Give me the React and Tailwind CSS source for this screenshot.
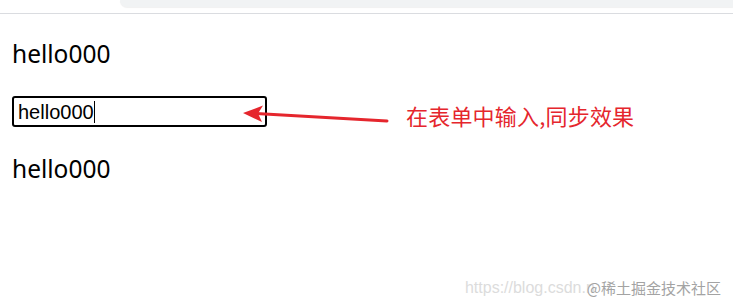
export default function App() {
  return (
    <main className="relative w-[733px] h-[306px] overflow-hidden bg-white">
      {/* browser chrome strip */}
      <div className="flex h-[14px] border-b border-[#dadce0]">
        <div className="w-[120px]"></div>
        <div className="flex-1 h-[7px] bg-[#f1f3f4] rounded-bl-[10px] shadow-[0_1px_1px_rgba(0,0,0,0.06)]"></div>
      </div>

      <div className="flex flex-col items-start pl-[12px] pt-[24px]">
        <p className="text-[24.5px] leading-[32px] text-black font-['Noto_Sans',sans-serif]">hello000</p>

        <div className="mt-[26px] flex items-center w-[255px] h-[31px] border-2 border-black rounded-[3px] pl-[4px] font-['Liberation_Sans',Arial,sans-serif] text-[20px] text-black">
          <span>hello000</span>
          <span className="w-px h-[22px] bg-black"></span>
        </div>

        <p className="mt-[26px] text-[24.5px] leading-[32px] text-black font-['Noto_Sans',sans-serif]">hello000</p>
      </div>

      {/* annotation arrow */}
      <svg className="absolute left-0 top-0" width="733" height="306" viewBox="0 0 733 306">
        <path d="M256 113.6 L387 121" stroke="#e5262d" strokeWidth="3" strokeLinecap="round" fill="none" />
        <path d="M243 113 L263 105.5 L258 113.5 L262 122 Z" fill="#e5262d" />
      </svg>

      <span className="absolute left-[406px] top-[100px] text-[22px] leading-[30px] tracking-[0.2px] text-[#e5262d] font-['Noto_Sans_CJK_SC',sans-serif]">
        在表单中输入,同步效果
      </span>

      {/* watermark */}
      <div className="absolute right-[12px] top-[276px] flex items-center">
        <span className="text-[16px] text-[#dcdcdc] font-['Liberation_Sans',sans-serif] -mr-[8px]">https://blog.csdn.n</span>
        <span className="text-[15px] text-[#a3a3a3] font-['Noto_Sans_CJK_SC',sans-serif]">@稀土掘金技术社区</span>
      </div>
    </main>
  );
}
